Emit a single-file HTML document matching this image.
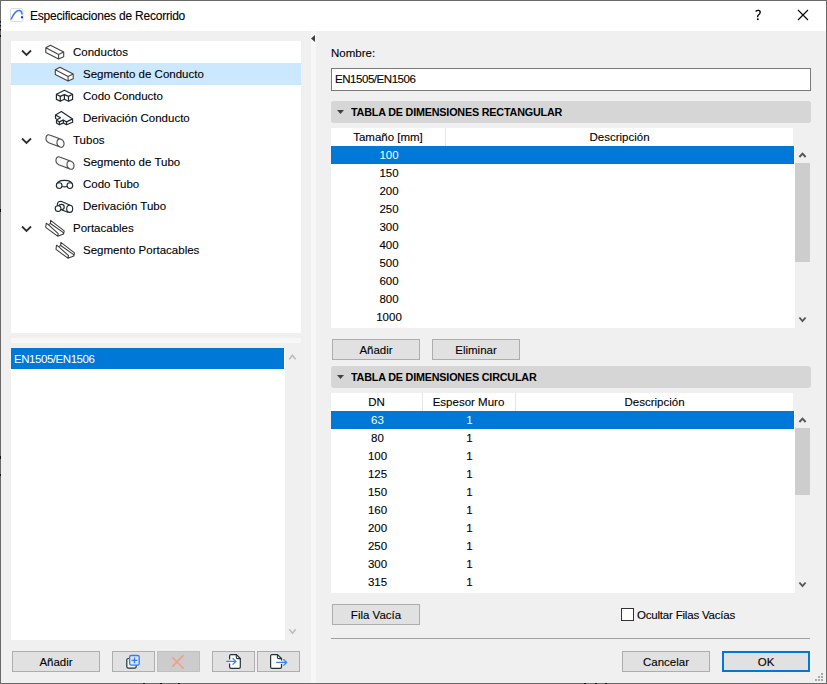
<!DOCTYPE html>
<html><head><meta charset="utf-8">
<style>
*{box-sizing:border-box;margin:0;padding:0}
html,body{width:827px;height:684px;overflow:hidden;background:#f0f0f0}
body{position:relative;font-family:"Liberation Sans",sans-serif;font-size:11.5px;color:#000;-webkit-text-stroke:0.1px #000}
.a{position:absolute}
.t{position:absolute;white-space:pre;line-height:22px}
.btn{position:absolute;background:#e1e1e1;border:1px solid #adadad;text-align:center;line-height:19px;padding-top:1px}
.hdr{position:absolute;background:#d6d6d6;border-radius:3px}
.ht{position:absolute;white-space:pre;font-weight:bold;-webkit-text-stroke:0;font-size:11.5px;letter-spacing:-0.2px;line-height:22px;transform:scaleX(0.937);transform-origin:0 0}
.tbl{position:absolute;background:#fff}
.row{position:absolute;left:0;height:18px;line-height:18px;width:463px}
.c{position:absolute;text-align:center;top:0}
.sel{background:#0078d7;color:#fff}
svg{position:absolute;overflow:visible}
</style></head><body>
<!-- window frame -->
<div class="a" style="left:0;top:0;width:827px;height:684px;border:1px solid #6a6a6a"></div>
<div class="a" style="left:1px;top:1px;width:825px;height:30px;background:#fff"></div>
<!-- title -->
<svg style="left:0;top:0" width="30" height="30">
 <rect x="10.5" y="8.5" width="12.5" height="13" rx="1.5" fill="#fff" stroke="#dcdcdc" stroke-width="1"/>
 <path d="M11 19.5 C13 15 16 10.5 19 10.5 C21 10.5 22 12 22 14.5" fill="none" stroke="#3f7ae6" stroke-width="1.6"/>
 <rect x="21" y="16.3" width="2" height="2" fill="#0a3aa0"/>
</svg>
<div class="t" style="left:30px;top:5px;font-size:12px;letter-spacing:-0.22px">Especificaciones de Recorrido</div>

<svg style="left:0;top:0" width="827" height="30">
 <path d="M798 10 L808 20 M808 10 L798 20" stroke="#000" stroke-width="1.1"/>
 <path d="M755.6 11.4 Q757 10.2 758.6 10.4 Q760.5 10.8 760.1 12.8 Q759.8 14 758.4 15 Q757.5 15.8 757.6 17.2" fill="none" stroke="#000" stroke-width="1.35"/>
 <circle cx="757.8" cy="19.3" r="0.95" fill="#000"/>
</svg>

<!-- splitter vertical -->
<div class="a" style="left:311px;top:31px;width:5px;height:652px;background:#f7f7f7"></div>
<svg style="left:0;top:0" width="827" height="60">
 <path d="M311 38.5 L315 35 L315 42 Z" fill="#404040"/>
</svg>

<!-- tree panel -->
<div class="a" style="left:11px;top:41px;width:290px;height:292px;background:#fff"></div>
<div class="a" style="left:11px;top:63px;width:290px;height:22px;background:#cce8ff"></div>
<div class="a" style="left:11px;top:338px;width:290px;height:5px;background:#f7f7f7"></div>

<div class="t" style="left:73px;top:41px">Conductos</div>
<div class="t" style="left:83px;top:63px">Segmento de Conducto</div>
<div class="t" style="left:83px;top:85px">Codo Conducto</div>
<div class="t" style="left:83px;top:107px">Derivación Conducto</div>
<div class="t" style="left:73px;top:129px">Tubos</div>
<div class="t" style="left:83px;top:151px">Segmento de Tubo</div>
<div class="t" style="left:83px;top:173px">Codo Tubo</div>
<div class="t" style="left:83px;top:195px">Derivación Tubo</div>
<div class="t" style="left:73px;top:217px">Portacables</div>
<div class="t" style="left:83px;top:239px">Segmento Portacables</div>
<svg style="left:0;top:0" width="827" height="684">
<path d="M22 50.5 L26.5 55.0 L31 50.5" fill="none" stroke="#303030" stroke-width="1.8"/>
<path d="M22 138.5 L26.5 143.0 L31 138.5" fill="none" stroke="#303030" stroke-width="1.8"/>
<path d="M22 226.5 L26.5 231.0 L31 226.5" fill="none" stroke="#303030" stroke-width="1.8"/>
<path d="M45.8 47.7 L50.4 45.3 L63.7 52.1 L63.7 56.7 L58.6 59.1 L45.8 52.6 Z" fill="#fff" stroke="none"/><path d="M45.8 47.7 L50.4 45.3 L63.7 52.1 L58.6 54.5 Z M45.8 47.7 L45.8 52.6 L58.6 59.1 L63.7 56.7 L63.7 52.1 M58.6 54.5 L58.6 59.1" fill="none" stroke="#444" stroke-width="1.1" stroke-linejoin="round"/>
<path d="M55.3 69.7 L59.9 67.3 L73.2 74.1 L73.2 78.7 L68.1 81.1 L55.3 74.6 Z" fill="#fff" stroke="none"/><path d="M55.3 69.7 L59.9 67.3 L73.2 74.1 L68.1 76.5 Z M55.3 69.7 L55.3 74.6 L68.1 81.1 L73.2 78.7 L73.2 74.1 M68.1 76.5 L68.1 81.1" fill="none" stroke="#444" stroke-width="1.1" stroke-linejoin="round"/>
<path transform="translate(0 0)" d="M56.4 94.3 L64.4 90.2 L72.6 94.3 L68.5 96.4 L64.4 94.6 L60.3 96.4 Z M56.4 94.3 L56.4 99.4 L60.3 101.3 L64.4 99.2 L68.5 101.3 L72.6 99.4 L72.6 94.3 M60.3 96.4 L60.3 101.3 M64.4 94.6 L64.4 99.2 M68.5 96.4 L68.5 101.3" fill="none" stroke="#1e2a30" stroke-width="1.2" stroke-linejoin="round"/>
<path transform="translate(0 0.5)" d="M55.5 114.4 L61.3 111.1 L72.6 118.4 L66.5 121.4 L63.4 119.4 L59.4 121.4 L56.5 119.5 L60.5 117.3 Z M55.5 114.4 L55.5 117.7 L56.5 118.5 M56.5 119.5 L56.5 122.4 L59.4 124.3 L63.4 122.4 L66.5 124.3 L72.6 121.8 L72.6 118.4 M59.4 121.4 L59.4 124.3 M63.4 119.4 L63.4 122.4 M66.5 121.4 L66.5 124.3" fill="none" stroke="#1e2a30" stroke-width="1.2" stroke-linejoin="round"/>
<path transform="translate(0 0)" d="M50.3 135.2 L61.1 139.2 A3.1 4.1 -25 0 1 59.9 147 L48.7 142.8 A3.1 4.1 -25 0 1 50.3 135.2 Z M61.1 139.2 A3.1 4.1 -25 0 0 59.9 147" fill="#f8f8f8" stroke="#4a4a4a" stroke-width="1.1"/>
<path transform="translate(10 22)" d="M50.3 135.2 L61.1 139.2 A3.1 4.1 -25 0 1 59.9 147 L48.7 142.8 A3.1 4.1 -25 0 1 50.3 135.2 Z M61.1 139.2 A3.1 4.1 -25 0 0 59.9 147" fill="#f8f8f8" stroke="#4a4a4a" stroke-width="1.1"/>
<g transform="translate(0 0)" fill="none" stroke="#1e2a30" stroke-width="1.15"><path d="M56.6 185.6 C56.6 182 60 180.3 64.5 180.3 C69 180.3 72.5 182 72.5 185.6 M62 186.5 Q64.5 187.4 67 186.5"/><circle cx="59.2" cy="185.6" r="2.85" fill="#fff"/><circle cx="69.9" cy="185.6" r="2.85" fill="#fff"/></g>
<g transform="translate(0 0)" fill="#fff" stroke="#1e2a30" stroke-width="1.15"><path d="M57.3 205 C57.3 202.3 59 201.2 61.1 201.2 L70.3 205.2 L68.2 212.3 L62.5 210.2 Z" fill="#f8f8f8"/><ellipse cx="69.7" cy="208.8" rx="3" ry="3.6"/><circle cx="61.5" cy="207" r="2.7"/><circle cx="58.1" cy="208.6" r="2.9"/></g>
<path transform="translate(0 0)" d="M46.2 223.3 L45.7 227.3 L57.6 236.2 L63.6 233.9 L64.2 230.9 L50.6 220.3 L50.4 223.5 L48.3 224.6 Z M48.3 224.6 L58.2 233.6 L57.6 236.2 M50.4 223.5 L63 232.4 L63.6 233.9" fill="#fff" stroke="#3a3a3a" stroke-width="1.05" stroke-linejoin="round"/>
<path transform="translate(10.3 22)" d="M46.2 223.3 L45.7 227.3 L57.6 236.2 L63.6 233.9 L64.2 230.9 L50.6 220.3 L50.4 223.5 L48.3 224.6 Z M48.3 224.6 L58.2 233.6 L57.6 236.2 M50.4 223.5 L63 232.4 L63.6 233.9" fill="#fff" stroke="#3a3a3a" stroke-width="1.05" stroke-linejoin="round"/>
</svg>

<!-- list panel -->
<div class="a" style="left:11px;top:348px;width:274px;height:292px;background:#fff"></div>
<div class="a" style="left:11px;top:348px;width:273px;height:21px;background:#0078d7"></div>
<div class="t" style="left:14px;top:349px;line-height:21px;color:#fff;-webkit-text-stroke:0;letter-spacing:-0.45px">EN1505/EN1506</div>

<!-- left bottom buttons -->
<div class="btn" style="left:12px;top:651px;width:88px;height:21px">Añadir</div>
<div class="btn" style="left:112px;top:651px;width:43px;height:21px"></div>
<div class="btn" style="left:157px;top:651px;width:43px;height:21px;background:#cccccc;border-color:#bfbfbf"></div>
<div class="btn" style="left:212px;top:651px;width:43px;height:21px"></div>
<div class="btn" style="left:257px;top:651px;width:43px;height:21px"></div>

<!-- right panel -->
<div class="t" style="left:331px;top:42px">Nombre:</div>
<div class="a" style="left:331px;top:68px;width:480px;height:23px;background:#fff;border:1px solid #7a7a7a"></div>
<div class="t" style="left:335px;top:69px;line-height:21px;letter-spacing:-0.45px">EN1505/EN1506</div>

<div class="hdr" style="left:331px;top:101px;width:480px;height:22px"></div><div class="ht" style="left:351px;top:101px">TABLA DE DIMENSIONES RECTANGULAR</div>
<svg style="left:0;top:0" width="827" height="130">
 <path d="M337 110 L344 110 L340.5 114 Z" fill="#404040"/>
</svg>

<div class="btn" style="left:332px;top:339px;width:88px;height:21px">Añadir</div>
<div class="btn" style="left:432px;top:339px;width:88px;height:21px">Eliminar</div>

<div class="hdr" style="left:331px;top:366px;width:480px;height:22px"></div><div class="ht" style="left:351px;top:366px">TABLA DE DIMENSIONES CIRCULAR</div>
<svg style="left:0;top:0" width="827" height="400">
 <path d="M337 375 L344 375 L340.5 379 Z" fill="#404040"/>
</svg>

<div class="btn" style="left:332px;top:604px;width:88px;height:21px">Fila Vacía</div>
<div class="a" style="left:621px;top:608px;width:13px;height:13px;background:#fff;border:1px solid #333"></div>
<div class="t" style="left:637px;top:604px;letter-spacing:-0.2px">Ocultar Filas Vacías</div>

<div class="a" style="left:331px;top:638px;width:479px;height:1px;background:#a0a0a0"></div>
<div class="btn" style="left:622px;top:651px;width:88px;height:21px">Cancelar</div>
<div class="btn" style="left:722px;top:651px;width:88px;height:21px;border:2px solid #0078d7;line-height:17px;padding-top:1px">OK</div>

<svg style="left:0;top:0" width="827" height="684">
 <path d="M289.3 359.3 L292.4 355.2 L295.6 359.3" fill="none" stroke="#bdbdbd" stroke-width="1.6"/>
 <path d="M289.2 629.3 L292.5 633.2 L295.7 629.3" fill="none" stroke="#bdbdbd" stroke-width="1.6"/>
 <rect x="126.8" y="658.5" width="9.4" height="9.6" rx="1.6" fill="#f6f6f6" stroke="#263238" stroke-width="1.2"/>
 <rect x="129.6" y="655.5" width="9.6" height="9.6" rx="1.6" fill="#e4e4e4" stroke="#2b7fff" stroke-width="1.3"/>
 <path d="M131.6 660.4 L137.4 660.4 M134.5 657.6 L134.5 663.2" stroke="#2b7fff" stroke-width="1.3"/>
 <path d="M172.3 657.3 L183.6 668.5 M172.3 666.6 L183.6 655.1" stroke="#f0a08c" stroke-width="1.7"/>
 <path d="M229.6 659.6 L229.6 656 Q229.6 654.6 231 654.6 L236.3 654.6 L240.3 658.6 L240.3 666.9 Q240.3 668.3 238.9 668.3 L231 668.3 Q229.6 668.3 229.6 666.9 L229.6 663.4" fill="#fff" stroke="#263238" stroke-width="1.2"/>
 <path d="M236.3 654.6 L236.3 657.2 Q236.3 658.6 237.7 658.6 L240.3 658.6" fill="none" stroke="#263238" stroke-width="1.1"/>
 <path d="M226.2 661.4 L236.2 661.4 M232.6 658.2 L235.9 661.4 L232.6 664.6" fill="none" stroke="#3385ff" stroke-width="1.3"/>
 <path d="M281.5 660.6 L281.5 658.6 L277.4 654.6 L272 654.6 Q270.6 654.6 270.6 656 L270.6 666.9 Q270.6 668.3 272 668.3 L280.1 668.3 Q281.5 668.3 281.5 666.9 L281.5 664" fill="#fff" stroke="#263238" stroke-width="1.2"/>
 <path d="M277.4 654.6 L277.4 657.2 Q277.4 658.6 278.8 658.6 L281.5 658.6" fill="none" stroke="#263238" stroke-width="1.1"/>
 <path d="M276.1 662.4 L286.6 662.4 M283.4 659.2 L286.6 662.4 L283.4 665.6" fill="none" stroke="#3385ff" stroke-width="1.3"/>
 <g fill="#a8a8a8"><rect x="821" y="673" width="2" height="2"/><rect x="818" y="676" width="2" height="2"/><rect x="821" y="676" width="2" height="2"/><rect x="815" y="679" width="2" height="2"/><rect x="818" y="679" width="2" height="2"/><rect x="821" y="679" width="2" height="2"/></g>
</svg>
<svg style="left:0;top:0" width="827" height="684"><g fill="#111">
<rect x="0" y="21" width="1" height="1.5"/><rect x="0" y="25" width="1" height="1.5"/><rect x="0" y="29" width="1" height="1.5"/><rect x="0" y="35" width="1" height="2"/><rect x="0" y="209" width="1" height="3"/><rect x="0" y="456" width="1" height="3"/><rect x="0" y="474" width="1" height="2"/>
<rect x="143" y="683" width="2" height="1"/><rect x="160" y="683" width="2" height="1"/><rect x="178" y="683" width="2" height="1"/>
<rect x="584" y="683" width="2" height="1"/><rect x="595" y="683" width="2" height="1"/><rect x="605" y="683" width="2" height="1"/>
</g></svg>
<div class="tbl" style="left:331px;top:128px;width:462px;height:18px"></div>
<div class="tbl" style="left:331px;top:146px;width:464px;height:182px"></div>
<div class="a" style="left:445px;top:128px;width:1px;height:18px;background:#e5e5e5"></div>
<div class="t" style="left:331px;top:128px;width:114px;text-align:center;line-height:18px">Tamaño [mm]</div>
<div class="t" style="left:445px;top:128px;width:349px;text-align:center;line-height:18px">Descripción</div>
<div class="a" style="left:331px;top:146px;width:463px;height:18px;background:#0078d7"></div>
<div class="t" style="left:332px;top:146px;width:114px;text-align:center;line-height:18px;color:#fff;-webkit-text-stroke:0">100</div>
<div class="t" style="left:332px;top:164px;width:114px;text-align:center;line-height:18px;color:#000">150</div>
<div class="t" style="left:332px;top:182px;width:114px;text-align:center;line-height:18px;color:#000">200</div>
<div class="t" style="left:332px;top:200px;width:114px;text-align:center;line-height:18px;color:#000">250</div>
<div class="t" style="left:332px;top:218px;width:114px;text-align:center;line-height:18px;color:#000">300</div>
<div class="t" style="left:332px;top:236px;width:114px;text-align:center;line-height:18px;color:#000">400</div>
<div class="t" style="left:332px;top:254px;width:114px;text-align:center;line-height:18px;color:#000">500</div>
<div class="t" style="left:332px;top:272px;width:114px;text-align:center;line-height:18px;color:#000">600</div>
<div class="t" style="left:332px;top:290px;width:114px;text-align:center;line-height:18px;color:#000">800</div>
<div class="t" style="left:332px;top:308px;width:114px;text-align:center;line-height:18px;color:#000">1000</div>
<div class="a" style="left:795px;top:163px;width:15px;height:99px;background:#cdcdcd"></div>
<svg style="left:0;top:0" width="827" height="684"><path d="M799.4 157 L802.5 153.6 L805.6 157" fill="none" stroke="#555" stroke-width="1.9"/><path d="M799.4 317.5 L802.5 321.1 L805.6 317.5" fill="none" stroke="#555" stroke-width="1.9"/></svg>
<div class="tbl" style="left:331px;top:393px;width:462px;height:18px"></div>
<div class="tbl" style="left:331px;top:411px;width:464px;height:182px"></div>
<div class="a" style="left:422px;top:393px;width:1px;height:18px;background:#e5e5e5"></div>
<div class="a" style="left:515px;top:393px;width:1px;height:18px;background:#e5e5e5"></div>
<div class="t" style="left:331px;top:393px;width:91px;text-align:center;line-height:18px">DN</div>
<div class="t" style="left:422px;top:393px;width:93px;text-align:center;line-height:18px">Espesor Muro</div>
<div class="t" style="left:515px;top:393px;width:279px;text-align:center;line-height:18px">Descripción</div>
<div class="a" style="left:331px;top:411px;width:463px;height:18px;background:#0078d7"></div>
<div class="t" style="left:332px;top:411px;width:91px;text-align:center;line-height:18px;color:#fff;-webkit-text-stroke:0">63</div>
<div class="t" style="left:423px;top:411px;width:93px;text-align:center;line-height:18px;color:#fff;-webkit-text-stroke:0">1</div>
<div class="t" style="left:332px;top:429px;width:91px;text-align:center;line-height:18px;color:#000">80</div>
<div class="t" style="left:423px;top:429px;width:93px;text-align:center;line-height:18px;color:#000">1</div>
<div class="t" style="left:332px;top:447px;width:91px;text-align:center;line-height:18px;color:#000">100</div>
<div class="t" style="left:423px;top:447px;width:93px;text-align:center;line-height:18px;color:#000">1</div>
<div class="t" style="left:332px;top:465px;width:91px;text-align:center;line-height:18px;color:#000">125</div>
<div class="t" style="left:423px;top:465px;width:93px;text-align:center;line-height:18px;color:#000">1</div>
<div class="t" style="left:332px;top:483px;width:91px;text-align:center;line-height:18px;color:#000">150</div>
<div class="t" style="left:423px;top:483px;width:93px;text-align:center;line-height:18px;color:#000">1</div>
<div class="t" style="left:332px;top:501px;width:91px;text-align:center;line-height:18px;color:#000">160</div>
<div class="t" style="left:423px;top:501px;width:93px;text-align:center;line-height:18px;color:#000">1</div>
<div class="t" style="left:332px;top:519px;width:91px;text-align:center;line-height:18px;color:#000">200</div>
<div class="t" style="left:423px;top:519px;width:93px;text-align:center;line-height:18px;color:#000">1</div>
<div class="t" style="left:332px;top:537px;width:91px;text-align:center;line-height:18px;color:#000">250</div>
<div class="t" style="left:423px;top:537px;width:93px;text-align:center;line-height:18px;color:#000">1</div>
<div class="t" style="left:332px;top:555px;width:91px;text-align:center;line-height:18px;color:#000">300</div>
<div class="t" style="left:423px;top:555px;width:93px;text-align:center;line-height:18px;color:#000">1</div>
<div class="t" style="left:332px;top:573px;width:91px;text-align:center;line-height:18px;color:#000">315</div>
<div class="t" style="left:423px;top:573px;width:93px;text-align:center;line-height:18px;color:#000">1</div>
<div class="a" style="left:795px;top:428px;width:15px;height:67px;background:#cdcdcd"></div>
<svg style="left:0;top:0" width="827" height="684"><path d="M799.4 422 L802.5 418.6 L805.6 422" fill="none" stroke="#555" stroke-width="1.9"/><path d="M799.4 582.5 L802.5 586.1 L805.6 582.5" fill="none" stroke="#555" stroke-width="1.9"/></svg>
</body></html>
